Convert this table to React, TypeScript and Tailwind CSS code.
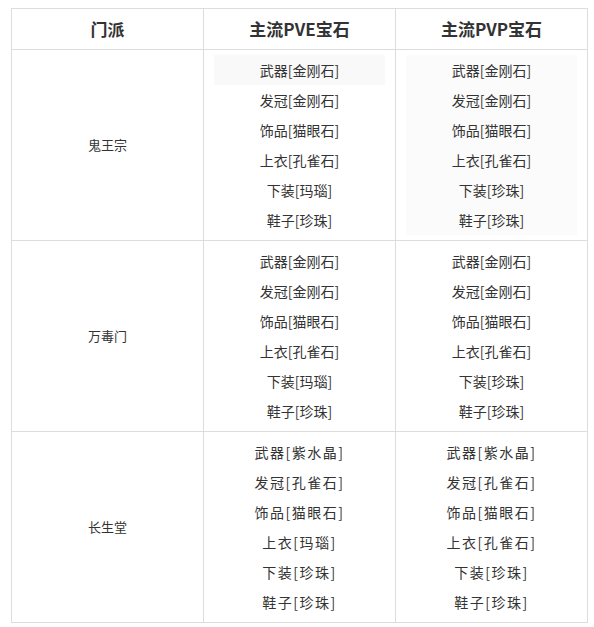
const groups = [
  {
    name: "鬼王宗",
    pve: ["武器[金刚石]", "发冠[金刚石]", "饰品[猫眼石]", "上衣[孔雀石]", "下装[玛瑙]", "鞋子[珍珠]"],
    pvp: ["武器[金刚石]", "发冠[金刚石]", "饰品[猫眼石]", "上衣[孔雀石]", "下装[珍珠]", "鞋子[珍珠]"],
    pveShade: "first",
    pvpShade: "all",
    wide: false,
  },
  {
    name: "万毒门",
    pve: ["武器[金刚石]", "发冠[金刚石]", "饰品[猫眼石]", "上衣[孔雀石]", "下装[玛瑙]", "鞋子[珍珠]"],
    pvp: ["武器[金刚石]", "发冠[金刚石]", "饰品[猫眼石]", "上衣[孔雀石]", "下装[珍珠]", "鞋子[珍珠]"],
    pveShade: "",
    pvpShade: "",
    wide: false,
  },
  {
    name: "长生堂",
    pve: ["武器[紫水晶]", "发冠[孔雀石]", "饰品[猫眼石]", "上衣[玛瑙]", "下装[珍珠]", "鞋子[珍珠]"],
    pvp: ["武器[紫水晶]", "发冠[孔雀石]", "饰品[猫眼石]", "上衣[孔雀石]", "下装[珍珠]", "鞋子[珍珠]"],
    pveShade: "",
    pvpShade: "",
    wide: true,
  },
];

const GemCell = ({ items, shade, wide }: any) => (
  <div className="border-r border-b border-[#dddddd] h-[191px] pt-[5px]">
    <div className={"mx-[10px] " + (shade === "all" ? "bg-[#fbfbfb]" : "")}>
      {items.map((t: string, i: number) => (
        <div
          key={i}
          className={
            "h-[30px] leading-[30px] text-center " +
            (wide ? "tracking-[1.5px] " : "") +
            (shade === "first" && i === 0 ? "bg-[#f9f9f9]" : "")
          }
        >
          {t}
        </div>
      ))}
    </div>
  </div>
);

export default function App() {
  return (
    <div
      className="w-[594px] h-[627px] bg-white pl-[11px] pt-[8px] text-[14px] text-[#333333]"
      style={{ fontFamily: '"Noto Sans CJK SC", "Liberation Sans", sans-serif' }}
    >
      <div className="grid grid-cols-[192px_192px_192px] w-[577px] border-l border-t border-[#dddddd]">
        <div className="border-r border-b border-[#dddddd] h-[41px] flex items-center justify-center text-[17px] font-bold">
          门派
        </div>
        <div className="border-r border-b border-[#dddddd] h-[41px] flex items-center justify-center text-[17px] font-bold">
          主流PVE宝石
        </div>
        <div className="border-r border-b border-[#dddddd] h-[41px] flex items-center justify-center text-[17px] font-bold">
          主流PVP宝石
        </div>
        {groups.map((g) => (
          <>
            <div
              key={g.name}
              className="border-r border-b border-[#dddddd] h-[191px] flex items-center justify-center text-[13px]"
            >
              {g.name}
            </div>
            <GemCell items={g.pve} shade={g.pveShade} wide={g.wide} />
            <GemCell items={g.pvp} shade={g.pvpShade} wide={g.wide} />
          </>
        ))}
      </div>
    </div>
  );
}
